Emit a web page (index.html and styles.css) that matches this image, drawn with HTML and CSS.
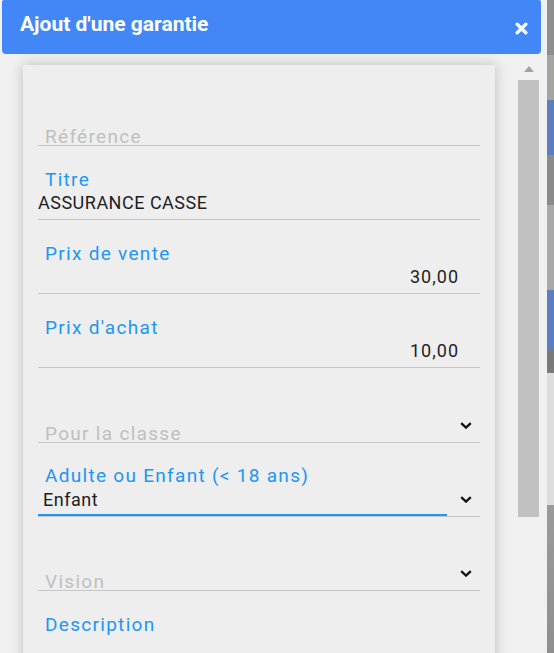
FILE: index.html
```html
<!DOCTYPE html>
<html lang="fr">
<head>
<meta charset="utf-8">
<title>Ajout d'une garantie</title>
<link rel="stylesheet" href="styles.css">
</head>
<body>
<div class="screen">
  <div class="modal">
    <header class="modal-header">
      <h1 class="modal-title">Ajout d'une garantie</h1>
      <span class="close" aria-label="Fermer">
        <svg width="13" height="13" viewBox="0 0 13 13"><path d="M2.2 2.2 L10.8 10.8 M10.8 2.2 L2.2 10.8" stroke="#fff" stroke-width="3.4" stroke-linecap="round" fill="none"/></svg>
      </span>
    </header>
    <div class="modal-body">
      <div class="content">
        <form class="card">
          <div class="field field-empty">
            <span class="placeholder">Référence</span>
          </div>
          <div class="field field-text">
            <span class="label">Titre</span>
            <span class="value">ASSURANCE CASSE</span>
          </div>
          <div class="field field-text">
            <span class="label">Prix de vente</span>
            <span class="value value-num">30,00</span>
          </div>
          <div class="field field-text">
            <span class="label">Prix d'achat</span>
            <span class="value value-num">10,00</span>
          </div>
          <div class="field field-empty field-tall">
            <span class="placeholder">Pour la classe</span>
            <svg class="chevron" viewBox="0 0 12 7"><path d="M1.2 1.2 L6 5.6 L10.8 1.2" stroke="#111" stroke-width="2.3" fill="none"/></svg>
          </div>
          <div class="field field-filled">
            <div class="select-box">
              <span class="label">Adulte ou Enfant (&lt; 18 ans)</span>
              <span class="value value-select">Enfant</span>
            </div>
            <svg class="chevron" viewBox="0 0 12 7"><path d="M1.2 1.2 L6 5.6 L10.8 1.2" stroke="#111" stroke-width="2.3" fill="none"/></svg>
          </div>
          <div class="field field-empty">
            <span class="placeholder">Vision</span>
            <svg class="chevron" viewBox="0 0 12 7"><path d="M1.2 1.2 L6 5.6 L10.8 1.2" stroke="#111" stroke-width="2.3" fill="none"/></svg>
          </div>
          <div class="field field-text field-open">
            <span class="label">Description</span>
          </div>
        </form>
      </div>
      <div class="scrollbar">
        <div class="scroll-arrow"></div>
        <div class="scroll-thumb"></div>
      </div>
    </div>
  </div>
  <div class="backdrop"></div>
</div>
</body>
</html>
```
FILE: styles.css
```css
html, body {
  margin: 0;
  padding: 0;
}

body {
  background: #f0f0f0;
  font-family: Roboto, "Noto Sans", sans-serif;
  overflow: hidden;
}

.screen {
  display: flex;
  width: 554px;
  height: 653px;
  overflow: hidden;
}

.modal {
  width: 547px;
  flex-shrink: 0;
  display: flex;
  flex-direction: column;
  background: #f0f0f0;
}

.modal-header {
  height: 54px;
  box-sizing: border-box;
  margin: 0 6px 0 2px;
  padding: 12px 13px 0 18px;
  background: #4287f5;
  border-radius: 2px 2px 4px 4px;
  display: flex;
  justify-content: space-between;
  align-items: flex-start;
}

.modal-title {
  margin: 0;
  font-family: Roboto, sans-serif;
  font-weight: 700;
  font-size: 21px;
  line-height: 24px;
  color: #ffffff;
}

.close {
  display: block;
  width: 13px;
  height: 13px;
  margin-top: 10px;
}

.close svg {
  display: block;
}

.modal-body {
  flex: 1;
  min-height: 0;
  display: flex;
  overflow: hidden;
}

.content {
  padding: 11px 0 0 23px;
}

.card {
  width: 472px;
  height: 700px;
  box-sizing: border-box;
  margin: 0;
  padding: 7px 15px 0;
  background: #eeeeee;
  box-shadow: 0 0 12px rgba(0, 0, 0, 0.22);
}

.field {
  display: flex;
  height: 74px;
  box-sizing: border-box;
  border-bottom: 1px solid #c6c6c6;
}

.field-tall {
  height: 75px;
}

.field-text {
  flex-direction: column;
  padding-top: 23px;
}

.field-open {
  border-bottom: none;
}

.field-empty,
.field-filled {
  justify-content: space-between;
  align-items: flex-end;
}

.label {
  display: block;
  font-size: 19px;
  line-height: 22px;
  letter-spacing: 1.3px;
  color: #2196f3;
  padding-left: 7px;
  white-space: nowrap;
}

.placeholder {
  display: block;
  font-size: 19px;
  line-height: 16px;
  letter-spacing: 1.3px;
  color: #bfbfbf;
  padding-left: 7px;
  white-space: nowrap;
}

.value {
  display: block;
  margin-top: 2px;
  font-size: 18px;
  line-height: 20px;
  letter-spacing: 0.5px;
  color: #1e1e1e;
  white-space: nowrap;
}

.value-num {
  text-align: right;
  padding-right: 21px;
  letter-spacing: 1px;
}

.select-box {
  width: 409px;
  box-sizing: border-box;
  padding: 22px 0 4px;
  border-bottom: 2px solid #2196f3;
}

.value-select {
  margin-top: 3px;
  padding-left: 5px;
}

.chevron {
  display: block;
  flex-shrink: 0;
  width: 12px;
  height: 7px;
  margin: 0 8px 13px 0;
}

.scrollbar {
  width: 21px;
  margin-left: 23px;
  display: flex;
  flex-direction: column;
  align-items: center;
}

.scroll-arrow {
  width: 0;
  height: 0;
  margin-top: 12px;
  border-left: 5.5px solid transparent;
  border-right: 5.5px solid transparent;
  border-bottom: 6px solid #a3a3a3;
}

.scroll-thumb {
  width: 21px;
  height: 437px;
  margin-top: 8px;
  background: #c1c1c1;
}

.backdrop {
  width: 7px;
  flex-shrink: 0;
  background: linear-gradient(to bottom,
    #8e8e8e 0px, #8e8e8e 55px,
    #a2a5a0 55px, #a2a5a0 100px,
    #5d7dbf 100px, #5d7dbf 155px,
    #8a8a8a 155px, #8a8a8a 205px,
    #a9a9a9 205px, #a9a9a9 290px,
    #5b7ec0 290px, #5b7ec0 350px,
    #7a7a7a 350px, #7a7a7a 373px,
    #dedede 373px, #dedede 505px,
    #9a9a9a 505px, #8f8f8f 653px);
}
```
